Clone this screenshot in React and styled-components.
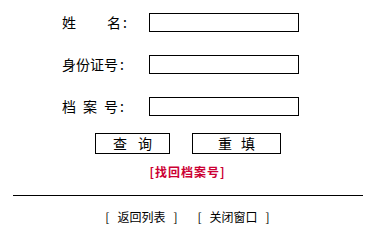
import React from 'react';
import styled, { createGlobalStyle } from 'styled-components';

const GlobalStyle = createGlobalStyle`
  html, body {
    margin: 0;
    padding: 0;
    background: #fff;
  }
  body {
    font-family: "Noto Sans CJK SC", "Liberation Sans", sans-serif;
    color: #000;
  }
`;

const Page = styled.div`
  width: 375px;
  display: flex;
  flex-direction: column;
  align-items: center;
  padding-top: 13px;
`;

const Form = styled.div`
  display: grid;
  grid-template-columns: 87px 150px;
  row-gap: 23px;
  align-items: center;
  margin-right: 14px;
`;

const Label = styled.div`
  display: flex;
  gap: ${(p) => p.$gap || 0}px;
  font-size: 14px;
  line-height: 19px;
`;

const Colon = styled.span`
  margin-left: 2px;
`;

const Input = styled.input`
  box-sizing: border-box;
  width: 150px;
  height: 19px;
  margin: 0;
  padding: 0 2px;
  border: 1px solid #000;
  background: #fff;
  outline: none;
`;

const Buttons = styled.div`
  display: flex;
  gap: 22px;
  margin-top: 17px;
  padding-left: 1px;
`;

const Button = styled.button`
  box-sizing: border-box;
  width: ${(p) => p.$w}px;
  height: 21px;
  margin: 0;
  padding: 0;
  display: flex;
  align-items: center;
  justify-content: center;
  gap: ${(p) => p.$gap}px;
  border: 1px solid #000;
  background: #fff;
  font-family: inherit;
  font-size: 14px;
  line-height: 19px;
  color: #000;
  cursor: pointer;
`;

const FindLink = styled.a`
  margin-top: 10px;
  font-size: 12px;
  font-weight: bold;
  line-height: 16px;
  letter-spacing: 1px;
  color: #cc0033;
  text-decoration: none;
`;

const Rule = styled.hr`
  width: 350px;
  height: 0;
  margin: 15px 0 0;
  border: 0;
  border-top: 1px solid #000;
`;

const Footer = styled.div`
  display: flex;
  gap: 20px;
  margin-top: 13px;
  font-size: 12px;
  line-height: 16px;
`;

const FooterLink = styled.a`
  display: flex;
  gap: 8px;
  color: #000;
  text-decoration: none;
  cursor: pointer;
`;

const fields = [
  { key: 'name', chars: ['姓', '名'], gap: 31 },
  { key: 'id', chars: ['身份证号'], gap: 0 },
  { key: 'file', chars: ['档', '案', '号'], gap: 7 },
];

export default function App() {
  return (
    <>
      <GlobalStyle />
      <Page>
        <Form>
          {fields.map((f) => (
            <React.Fragment key={f.key}>
              <Label $gap={f.gap}>
                {f.chars.map((c, i) => (
                  <span key={i}>
                    {c}
                    {i === f.chars.length - 1 && <Colon>:</Colon>}
                  </span>
                ))}
              </Label>
              <Input type="text" />
            </React.Fragment>
          ))}
        </Form>
        <Buttons>
          <Button $w={75} $gap={11}>
            <span>查</span>
            <span>询</span>
          </Button>
          <Button $w={89} $gap={9}>
            <span>重</span>
            <span>填</span>
          </Button>
        </Buttons>
        <FindLink href="#">[找回档案号]</FindLink>
        <Rule />
        <Footer>
          <FooterLink>
            <span>[</span>
            <span>返回列表</span>
            <span>]</span>
          </FooterLink>
          <FooterLink>
            <span>[</span>
            <span>关闭窗口</span>
            <span>]</span>
          </FooterLink>
        </Footer>
      </Page>
    </>
  );
}
